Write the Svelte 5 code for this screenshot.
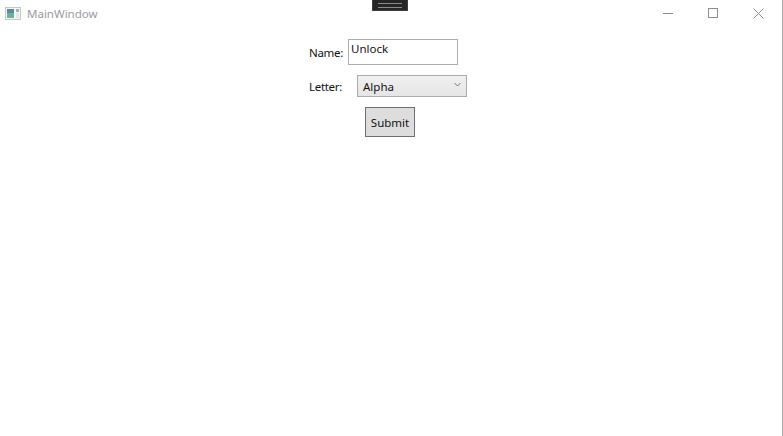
<script>
  let name = 'Unlock';
</script>

<div class="window">
  <header class="titlebar">
    <div class="title">
      <svg class="app-icon" width="16" height="14" viewBox="0 0 16 14" aria-hidden="true">
        <rect x="0.5" y="0.5" width="15" height="12" fill="#f4f5f5" stroke="#c2c7c9" />
        <rect x="2" y="2" width="7" height="9" fill="#6fb09c" />
        <rect x="2" y="2" width="7" height="4" fill="#5c88a0" />
        <rect x="11" y="2" width="3" height="3" fill="#a3aeb3" />
        <rect x="11" y="6" width="3" height="5" fill="#e4e7e8" />
      </svg>
      <span>MainWindow</span>
    </div>
    <div class="debug-tab"><span></span></div>
    <div class="controls">
      <svg width="10" height="10" viewBox="0 0 10 10" aria-hidden="true"><path d="M0 5.5H10" stroke="#8c8c8c" /></svg>
      <svg width="10" height="10" viewBox="0 0 10 10" aria-hidden="true"><rect x="0.5" y="0.5" width="9" height="9" fill="none" stroke="#8c8c8c" /></svg>
      <svg width="11" height="11" viewBox="0 0 11 11" aria-hidden="true"><path d="M0.5 0.5L10.5 10.5M10.5 0.5L0.5 10.5" stroke="#8c8c8c" /></svg>
    </div>
  </header>

  <main class="form">
    <div class="row name-row">
      <label for="name">Name:</label>
      <input id="name" type="text" value={name} />
    </div>
    <div class="row letter-row">
      <span class="label">Letter:</span>
      <div class="combo">
        <span>Alpha</span>
        <svg width="7" height="5" viewBox="0 0 7 5" aria-hidden="true"><path d="M0.5 1L3.5 4L6.5 1" fill="none" stroke="#777" /></svg>
      </div>
    </div>
    <button type="button" class="submit">Submit</button>
  </main>
</div>

<style>
  :global(body) {
    background: #fff;
    overflow: hidden;
  }
  .window {
    box-sizing: border-box;
    height: 436px;
    background: #fff;
    border-right: 1px solid #ababab;
    font-family: "Noto Sans", sans-serif;
    font-size: 11.5px;
    color: #111;
    display: flex;
    flex-direction: column;
  }
  .titlebar {
    height: 29px;
    flex: none;
    display: grid;
    grid-template-columns: 1fr 36px 1fr;
    align-items: start;
  }
  .title {
    display: flex;
    align-items: center;
    gap: 6px;
    height: 26px;
    padding-left: 5px;
    color: #9a9aa2;
  }
  .app-icon {
    margin-top: 2px;
  }
  .debug-tab {
    height: 11px;
    width: 36px;
    margin-left: -1px;
    background: #252526;
    border: 1px solid #3e3e40;
    border-top: none;
    box-sizing: border-box;
    display: flex;
    align-items: center;
    justify-content: center;
  }
  .debug-tab span {
    width: 24px;
    height: 3px;
    margin-top: 1px;
    border-top: 1px solid #8a8a8a;
    border-bottom: 1px solid #8a8a8a;
  }
  .controls {
    display: flex;
    justify-content: flex-end;
    align-items: center;
    gap: 35px;
    height: 26px;
    padding-right: 18px;
  }
  .form {
    display: flex;
    flex-direction: column;
    align-items: flex-start;
    padding-left: 309px;
  }
  .row {
    display: flex;
    align-items: center;
  }
  .name-row {
    margin-top: 10px;
  }
  .name-row label {
    width: 39px;
    margin-top: 1px;
    letter-spacing: -0.3px;
  }
  input {
    box-sizing: border-box;
    width: 110px;
    height: 26px;
    border: 1px solid #abadb3;
    border-radius: 0;
    padding: 0 2px 7px;
    margin: 0;
    font: inherit;
    color: #111;
    outline: none;
  }
  .letter-row {
    margin-top: 10px;
  }
  .letter-row .label {
    width: 48px;
    letter-spacing: -0.3px;
  }
  .combo {
    box-sizing: border-box;
    width: 110px;
    height: 22px;
    border: 1px solid #acacac;
    background: linear-gradient(#f0f0f0, #e5e5e5);
    display: flex;
    align-items: center;
    justify-content: space-between;
    padding: 1px 5px 0;
  }
  .combo svg {
    margin-top: -5px;
  }
  .submit {
    box-sizing: border-box;
    width: 50px;
    height: 30px;
    margin: 10px 0 0 56px;
    padding: 1px 0 0;
    background: #dddddd;
    border: 1px solid #707070;
    border-radius: 0;
    font: inherit;
    color: #111;
  }
</style>
